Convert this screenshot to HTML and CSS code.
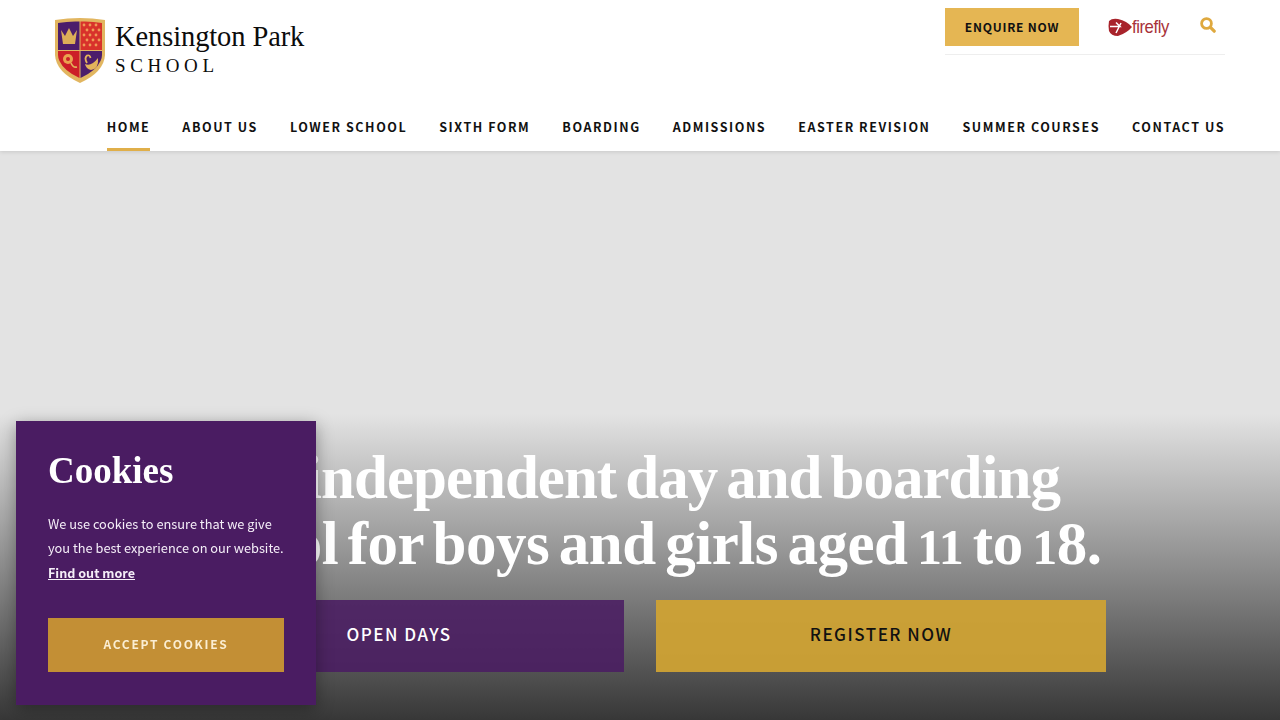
FILE: index.html
```html
<!DOCTYPE html>
<html lang="en">
<head>
<meta charset="utf-8">
<title>Kensington Park School</title>
<link rel="stylesheet" href="styles.css">
</head>
<body>
<header class="site-header">
  <div class="header-top">
    <a class="brand" href="#">
      <svg class="crest" viewBox="0 0 50 66" width="50" height="66" aria-hidden="true">
        <path d="M0 3 Q25 -1 50 3 L50 38 Q49 55 25 66 Q1 55 0 38 Z" fill="#e2b660"/>
        <path d="M3 6 Q14 4 24.5 4.5 V33 H3 Z" fill="#4c1d6b"/>
        <path d="M25.5 4.5 Q36 4 47 6 V33 H25.5 Z" fill="#d8322b"/>
        <path d="M3 34 H24.5 V61 Q9 54 4.5 44 Q3 41 3 38 Z" fill="#cc1f28"/>
        <path d="M25.5 34 H47 V38 Q47 41 45.5 44 Q41 54 25.5 61 Z" fill="#4c1d6b"/>
        <path d="M6 13 L10 19 L14 11 L18 19 L22 13 L20 27 H8 Z" fill="#dcae58"/>
        <g fill="#ef9a55"><circle cx="29" cy="8" r="1.4"/><circle cx="35" cy="8" r="1.4"/><circle cx="41" cy="8" r="1.4"/><circle cx="32" cy="13" r="1.4"/><circle cx="38" cy="13" r="1.4"/><circle cx="44" cy="13" r="1.4"/><circle cx="29" cy="18" r="1.4"/><circle cx="35" cy="18" r="1.4"/><circle cx="41" cy="18" r="1.4"/><circle cx="32" cy="23" r="1.4"/><circle cx="38" cy="23" r="1.4"/><circle cx="44" cy="23" r="1.4"/><circle cx="29" cy="28" r="1.4"/><circle cx="35" cy="28" r="1.4"/><circle cx="41" cy="28" r="1.4"/></g>
        <circle cx="13" cy="42" r="5" fill="#eaa34f"/>
        <circle cx="13" cy="42" r="2" fill="#cc1f28"/>
        <path d="M16 46 Q18 51 22 50" stroke="#e3b45b" stroke-width="1.6" fill="none"/>
        <path d="M32 46 Q29 41 32 38.5 Q35 37.5 35.5 41" stroke="#e3b45b" stroke-width="1.8" fill="none"/>
        <path d="M30 47 Q36 50 43 41 Q44 52 36 53 Q31 52 30 47 Z" fill="#e3b45b"/>
      </svg>
      <span class="brand-text">
        <span class="brand-name">Kensington Park</span>
        <span class="brand-sub">SCHOOL</span>
      </span>
    </a>
    <div class="utility">
      <a class="enquire" href="#">ENQUIRE NOW</a>
      <a class="firefly" href="#">
        <svg class="firefly-mark" viewBox="0 0 24 18" width="24" height="18" aria-hidden="true">
          <path d="M1 3 Q4 0 10 1 Q19 3 24 9 Q19 15 10 18 Q3 18 1 13 Q0 8 1 3 Z" fill="#a8232b"/>
          <path d="M2 8.5 H12 L8 4.5 M13 5 L8 15" stroke="#fff" stroke-width="1.5" fill="none"/>
        </svg>
        <span class="firefly-word">firefly</span>
      </a>
      <a class="search" href="#" aria-label="Search">
        <svg viewBox="0 0 16 16" width="16" height="16" aria-hidden="true">
          <circle cx="6.5" cy="6.5" r="4.9" fill="none" stroke="#dfa93f" stroke-width="2.8"/>
          <path d="M10.2 10.2 L14.2 14.2" stroke="#dfa93f" stroke-width="3.2" stroke-linecap="round"/>
        </svg>
      </a>
    </div>
  </div>
  <nav class="main-nav">
    <a class="active" href="#">HOME</a>
    <a href="#">ABOUT US</a>
    <a href="#">LOWER SCHOOL</a>
    <a href="#">SIXTH FORM</a>
    <a href="#">BOARDING</a>
    <a href="#">ADMISSIONS</a>
    <a href="#">EASTER REVISION</a>
    <a href="#">SUMMER COURSES</a>
    <a href="#">CONTACT US</a>
  </nav>
</header>
<main class="hero">
  <div class="hero-content">
    <h1><span class="line">An independent day and boarding</span><span class="line line-wide">school for boys and girls aged <span class="osf">11</span> to <span class="osf">1</span>8.</span></h1>
    <div class="hero-actions">
      <a class="cta cta-purple" href="#">OPEN DAYS</a>
      <a class="cta cta-gold" href="#">REGISTER NOW</a>
    </div>
  </div>
</main>
<aside class="cookie">
  <h2>Cookies</h2>
  <p>We use cookies to ensure that we give you the best experience on our website.</p>
  <a class="cookie-link" href="#">Find out more</a>
  <a class="cookie-btn" href="#">ACCEPT COOKIES</a>
</aside>
</body>
</html>
```
FILE: styles.css
```css
* { box-sizing: border-box; }
html, body { margin: 0; height: 100%; overflow: hidden; }
body { font-family: "Noto Sans CJK JP", "Noto Sans", sans-serif; background: #fff; color: #111; }
a { text-decoration: none; color: inherit; }

.site-header { height: 151px; background: #fff; padding: 0 55px; display: flex; flex-direction: column; position: relative; z-index: 2; box-shadow: 0 1px 4px rgba(0,0,0,.12); }
.header-top { display: flex; justify-content: space-between; align-items: flex-start; height: 103px; }
.brand { display: flex; align-items: flex-start; gap: 10px; padding-top: 17px; }
.crest { display: block; }
.brand-text { display: flex; flex-direction: column; font-family: "Liberation Serif", serif; color: #0c0c0c; }
.brand-name { font-size: 28.5px; line-height: 36px; margin-top: 2px; letter-spacing: -.1px; }
.brand-sub { font-size: 19px; line-height: 22px; letter-spacing: 4.6px; }

.utility { width: 280px; height: 55px; padding-top: 8px; display: flex; align-items: flex-start; border-bottom: 1px solid #eee; }
.enquire { width: 134px; height: 38px; padding-bottom: 2px; background: #e5b653; color: #111; font-size: 12px; font-weight: 700; letter-spacing: .75px; display: flex; align-items: center; justify-content: center; }
.firefly { display: flex; align-items: center; width: 63px; margin-left: 29px; margin-top: 9px; gap: 0; }
.firefly-mark { flex: none; }
.firefly-word { flex: none; display: inline-block; font-family: "Liberation Sans", sans-serif; font-size: 19px; line-height: 20px; color: #a8323a; letter-spacing: -.5px; transform: scaleX(.88); transform-origin: left center; }
.search { margin-left: 29px; margin-top: 9px; display: block; height: 16px; transform: translateY(-3px); }

.main-nav { display: flex; justify-content: flex-end; gap: 32px; }
.main-nav a { font-size: 12.5px; font-weight: 600; letter-spacing: 1.55px; height: 48px; line-height: 48px; color: #111; border-bottom: 3px solid transparent; }
.main-nav a.active { border-bottom-color: #e0af4a; }

.hero { height: 569px; background: linear-gradient(to bottom, #e3e3e3 0, #e3e3e3 263px, #373737 569px); display: flex; justify-content: center; }
.hero-content { padding-top: 294px; display: flex; flex-direction: column; align-items: center; }
.hero h1 { margin: 0; font-family: "Liberation Serif", serif; font-weight: 700; font-size: 61px; line-height: 66px; letter-spacing: -1px; word-spacing: -5.2px; color: #fff; text-align: center; white-space: nowrap; }
.line { display: block; }
.line-wide { letter-spacing: -.5px; }
.osf { font-size: 50px; line-height: 0; }
.hero-actions { display: flex; gap: 32px; margin-top: 23px; }
.cta { width: 450px; height: 72px; padding-bottom: 6px; display: flex; align-items: center; justify-content: center; font-size: 17px; font-weight: 500; letter-spacing: 1.5px; }
.cta-purple { background: rgba(74,28,98,.88); color: #fff; }
.cta-gold { background: rgba(207,162,52,.95); color: #111; }

.cookie { position: fixed; left: 16px; top: 421px; width: 300px; height: 284px; background: #4a1c62; color: #f5eef8; padding: 27px 32px; z-index: 3; box-shadow: 0 4px 16px rgba(0,0,0,.35); }
.cookie h2 { margin: 0; font-family: "Liberation Serif", serif; font-weight: 700; font-size: 37px; line-height: 46px; color: #fff; }
.cookie p { margin: 18px 0 0; font-size: 12.8px; line-height: 24px; }
.cookie-link { display: block; margin-top: 1px; font-size: 12.6px; font-weight: 700; line-height: 24px; text-decoration: underline; }
.cookie-btn { display: flex; align-items: center; justify-content: center; margin-top: 33px; height: 54px; padding-bottom: 4px; background: #c38f35; color: #fbeed3; font-size: 12px; font-weight: 700; letter-spacing: 1.7px; }
```
